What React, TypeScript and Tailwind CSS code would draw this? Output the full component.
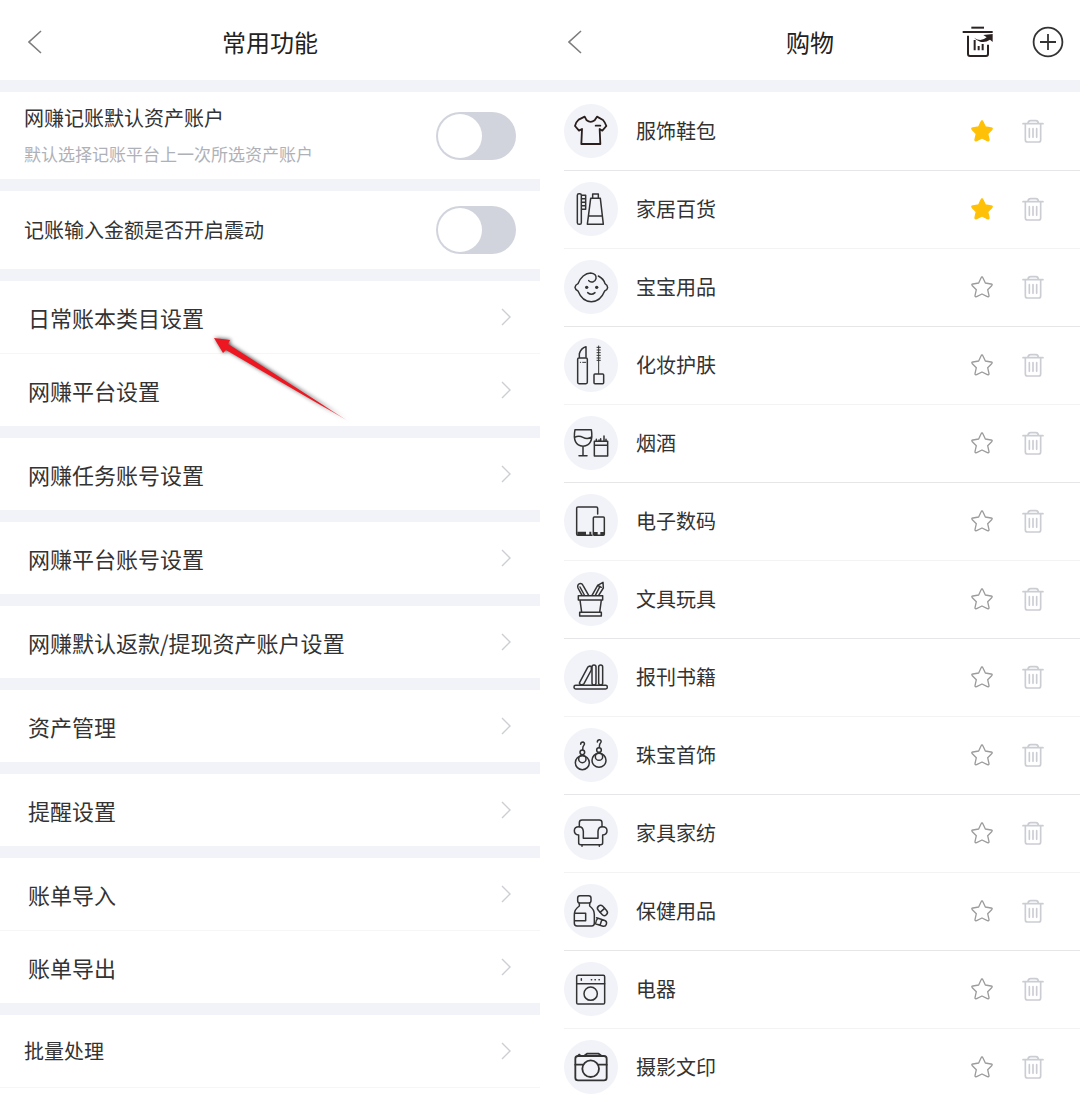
import { useState, type ReactNode } from "react";
import clsx from "clsx";

interface Category {
  name: string;
  icon: ReactNode;
  starred?: boolean;
}

interface SettingGroup {
  items: string[];
  highlighted?: boolean;
}

const settingGroups: SettingGroup[] = [
  { items: ["日常账本类目设置", "网赚平台设置"], highlighted: true },
  { items: ["网赚任务账号设置"] },
  { items: ["网赚平台账号设置"] },
  { items: ["网赚默认返款/提现资产账户设置"] },
  { items: ["资产管理"] },
  { items: ["提醒设置"] },
  { items: ["账单导入", "账单导出"] },
];

// Category icons share a 162 x 162 canvas, the size of the round badge
const categories: Category[] = [
  {
    name: "服饰鞋包",
    starred: true,
    icon: (
      <g stroke="#2b1f1e" strokeWidth={5.5}>
        <path d="M62 38L68 49Q80 58 92 49L99 38L117 48Q124 56 127 66L115 80L107 75L109 120H52L54 75L45 80L33 66Q35 55 44 47Z" />
        <path d="M95 65H109" />
      </g>
    ),
  },
  {
    name: "家居百货",
    starred: true,
    icon: (
      <>
        <rect x="40" y="35" width="12" height="92" rx="5" />
        <path d="M53 40H65V82H53M53 50H65M53 61H65M53 71H65" />
        <path d="M86 48V36H103V48M80 49H109L118 127H70ZM73 102H115" />
      </>
    ),
  },
  {
    name: "宝宝用品",
    icon: (
      <>
        <path d="M103 48C114 54 121 63 123 71Q131 76 131 83Q130 90 122 93C114 113 99 125 82 125C65 125 50 113 42 93Q34 90 33 82Q34 74 42 71C49 52 64 39 80 39C92 40 98 47 96 56C94 66 80 70 74 62" />
        <path d="M71 98Q82 108 93 98" />
        <g fill="#333" stroke="none">
          <circle cx="68" cy="82" r="5" />
          <circle cx="98" cy="82" r="5" />
        </g>
      </>
    ),
  },
  {
    name: "化妆护肤",
    icon: (
      <>
        <rect x="41" y="60" width="29" height="77" rx="4" />
        <path d="M46 58V47Q51 30 66 26V58" />
        <path d="M49 73H50M56 73H65" strokeWidth={3} />
        <path d="M104 24V107" strokeWidth={3} />
        <path d="M99 28H109M99 36H109M99 44H109M99 52H109M99 60H109M99 67H109" strokeWidth={3} />
        <rect x="90" y="108" width="29" height="29" rx="3" />
      </>
    ),
  },
  {
    name: "烟酒",
    icon: (
      <>
        <path d="M33 41H82Q90 88 57 91Q24 88 33 41ZM32 64Q44 57 57 64Q70 71 83 63M57 91V118M45 119H69" />
        <path d="M91 76H131V120H91ZM91 88H131" />
        <path d="M97 70V76M105 72V76M110 68V76M120 60V76M126 70V76" />
      </>
    ),
  },
  {
    name: "电子数码",
    icon: (
      <>
        <path d="M84 124H41Q38 124 38 120V42Q38 39 42 39H97Q101 39 101 43V60" />
        <rect x="88" y="69" width="33" height="55" rx="3" />
        <path d="M40 118H66M76 118H82M90 119H101M109 119H120" strokeWidth={10} strokeLinecap="butt" />
      </>
    ),
  },
  {
    name: "文具玩具",
    icon: (
      <>
        <path d="M43 71H116V84H43ZM48 84L53 121M112 84L107 121M47 121H112V132H47Z" />
        <path d="M54 70L42 48Q39 38 47 35Q54 34 57 40L74 70M48 45L61 69" />
        <path d="M84 70L101 40L117 31L118 48L104 70M94 70L108 43M101 40L112 46" />
      </>
    ),
  },
  {
    name: "报刊书籍",
    icon: (
      <>
        <rect x="30" y="106" width="100" height="11" rx="5" />
        <rect x="104" y="45" width="12" height="60" rx="6" />
        <rect x="84" y="45" width="12" height="60" rx="6" />
        <path d="M47 97L71 52Q76 46 82 50V60L60 101Q57 106 50 104Q45 102 47 97Z" />
      </>
    ),
  },
  {
    name: "珠宝首饰",
    icon: (
      <>
        <circle cx="55" cy="104" r="21" />
        <circle cx="55" cy="93" r="11" />
        <circle cx="55" cy="73" r="7" />
        <path d="M50 49Q50 42 57 42Q64 45 60 51Q56 54 56 65" />
        <circle cx="105" cy="97" r="21" />
        <circle cx="105" cy="86" r="11" />
        <circle cx="105" cy="66" r="7" />
        <path d="M100 42Q100 35 107 35Q114 38 110 44Q106 47 106 58" />
      </>
    ),
  },
  {
    name: "家具家纺",
    icon: (
      <>
        <path d="M46 62V50Q46 42 54 42H106Q114 42 114 50V62" />
        <path d="M44 87Q31 85 31 74Q31 62 45 62Q57 62 58 76V97H102V76Q103 62 115 62Q129 62 129 74Q129 85 116 87V110Q116 116 110 116H50Q44 116 44 110Z" />
        <path d="M54 116V121M106 116V121" />
      </>
    ),
  },
  {
    name: "保健用品",
    icon: (
      <>
        <rect x="41" y="35" width="40" height="22" rx="7" />
        <path d="M46 58V66Q31 76 31 92V118Q31 126 39 126H83Q91 126 91 118V92Q91 76 77 66V58M31 88H65V110H31" />
        <g transform="rotate(48 115 79)">
          <rect x="98" y="70" width="35" height="18" rx="9" />
          <path d="M115 70V88" />
        </g>
        <g transform="rotate(18 110 115)">
          <path d="M94 106H118Q128 106 128 115Q128 124 118 124H94M111 106V124M98 106Q94 114 97 124" />
        </g>
      </>
    ),
  },
  {
    name: "电器",
    icon: (
      <>
        <rect x="38" y="40" width="84" height="86" rx="4" />
        <path d="M38 65H122" />
        <circle cx="80" cy="95" r="20" />
        <path d="M52 50V55M82 53H83M93 53H94M105 53H106" />
      </>
    ),
  },
  {
    name: "摄影文印",
    icon: (
      <g strokeWidth={5.5}>
        <rect x="34" y="48" width="94" height="73" rx="8" />
        <path d="M61 47L69 41H104L112 47M34 74H57M103 74H128M45 44H47M43 46V48" />
        <circle cx="80" cy="86" r="25" />
      </g>
    ),
  },
];

function ScreenHeader({ title, children }: { title: string; children?: ReactNode }) {
  return (
    <header className="grid h-20 grid-cols-[1fr_auto_1fr] items-center bg-white pt-1 pr-4 pl-7">
      <button type="button" aria-label="返回" className="-mr-3 justify-self-start">
        <svg className="h-6 w-4" viewBox="0 0 16 24" fill="none" stroke="#7d7d7d" strokeWidth={1.6}>
          <path d="M13 1L1 12L13 23" />
        </svg>
      </button>
      <h1 className="-ml-3 text-2xl text-[#222]">{title}</h1>
      <div className="flex items-center justify-end gap-[38px]">{children}</div>
    </header>
  );
}

function Toggle({ id }: { id: string }) {
  return (
    <input
      id={id}
      type="checkbox"
      role="switch"
      className="h-12 w-20 shrink-0 appearance-none rounded-full bg-[#d1d4dc] p-0.5 before:block before:size-11 before:rounded-full before:bg-white before:transition-transform checked:bg-[#ffc107] checked:before:translate-x-8"
    />
  );
}

function Chevron() {
  return (
    <svg className="h-5 w-3 shrink-0" viewBox="0 0 12 20" fill="none" stroke="#ccced3" strokeWidth={1.4}>
      <path d="M2 2L10 10L2 18" />
    </svg>
  );
}

function PointerArrow() {
  return (
    <svg
      className="pointer-events-none absolute top-[53px] left-[210px] h-[92px] w-[144px] drop-shadow-[1px_0_2px_rgba(0,0,0,0.75)]"
      viewBox="0 0 144 92"
    >
      <defs>
        <linearGradient id="arrow-fade" x1="0" y1="0" x2="1" y2="0">
          <stop offset="0.8" stopColor="#ee1620" />
          <stop offset="1" stopColor="#ee1620" stopOpacity="0.3" />
        </linearGradient>
      </defs>
      <path d="M4 4L20 6L18 10L138 87L16 16L13 19Z" fill="url(#arrow-fade)" />
    </svg>
  );
}

function TrashIcon() {
  return (
    <svg
      className="h-6 w-[22px]"
      viewBox="0 0 66 72"
      fill="none"
      stroke="#cbcdd3"
      strokeWidth={5}
      strokeLinecap="round"
    >
      <path d="M18 12Q19 5 26 5H42Q48 5 49 12M3 14H63M10 15V62Q10 69 17 69H50Q56 69 56 62V15M22 29V55M33 29V55M44 29V55" />
    </svg>
  );
}

function StarIcon({ filled }: { filled: boolean }) {
  return (
    <svg
      className="h-6 w-6"
      viewBox="0 0 72 72"
      fill={filled ? "#ffc107" : "none"}
      stroke={filled ? "#ffc107" : "#9c9c9c"}
      strokeWidth={4}
      strokeLinejoin="round"
    >
      <path d="M36 6Q38 6 39 9L46 24L63 27Q69 28 65 32L53 44L57 62Q57 66 52 65L36 57L20 65Q15 66 15 62L19 44L7 32Q3 28 9 27L26 24L33 9Q34 6 36 6Z" />
    </svg>
  );
}

function SettingsScreen() {
  return (
    <section className="flex flex-col gap-3 bg-[#f2f3f8]">
      <ScreenHeader title="常用功能" />

      <div className="flex h-[87px] items-center justify-between bg-white px-6">
        <label htmlFor="default-account" className="flex flex-col gap-3">
          <span className="text-xl leading-6 text-[#333]">网赚记账默认资产账户</span>
          <span className="text-[17px] leading-6 text-[#afb1b8]">默认选择记账平台上一次所选资产账户</span>
        </label>
        <Toggle id="default-account" />
      </div>

      <div className="flex h-[78px] items-center justify-between bg-white px-6">
        <label htmlFor="vibrate" className="text-xl text-[#333]">
          记账输入金额是否开启震动
        </label>
        <Toggle id="vibrate" />
      </div>

      {settingGroups.map((group) => (
        <div key={group.items[0]} className="relative bg-white">
          <ul className="divide-y divide-[#f6f6f7]">
            {group.items.map((item) => (
              <li key={item}>
                <button
                  type="button"
                  className="flex h-[72px] w-full items-center justify-between px-7 text-left text-[22px] text-[#333]"
                >
                  {item}
                  <Chevron />
                </button>
              </li>
            ))}
          </ul>
          {group.highlighted && <PointerArrow />}
        </div>
      ))}

      <div className="flex-1 bg-white">
        <button
          type="button"
          className="flex h-[73px] w-full items-center justify-between border-b border-[#f6f6f7] pr-7 pl-6 text-left text-xl text-[#333]"
        >
          批量处理
          <Chevron />
        </button>
      </div>
    </section>
  );
}

function CategoryScreen() {
  const [starred, setStarred] = useState<string[]>(
    categories.filter((c) => c.starred).map((c) => c.name)
  );

  const toggleStar = (name: string) => {
    setStarred((prev) =>
      prev.includes(name) ? prev.filter((n) => n !== name) : [...prev, name]
    );
  };

  return (
    <section className="flex flex-col gap-3 bg-[#f2f3f8]">
      <ScreenHeader title="购物">
        <button type="button" aria-label="回收站">
          <svg className="h-8 w-8" viewBox="0 0 96 96" fill="none" stroke="#2b2322" strokeWidth={6}>
            <path d="M28 5H66" />
            <path d="M2 18H92" />
            <path d="M18 29V84Q18 90 24 90H72Q78 90 78 84V56" />
            <path d="M38 42V73M50 60V73M62 54V73" />
            <path d="M36 35Q56 50 74 34L64 27L92 24V48L84 41Q60 58 36 35Z" fill="#2b2322" stroke="none" />
          </svg>
        </button>
        <button type="button" aria-label="添加">
          <svg className="h-8 w-8" viewBox="0 0 32 32" fill="none" stroke="#333" strokeWidth={1.8}>
            <circle cx="16" cy="16" r="14.4" />
            <path d="M8 16H24M16 8V24" />
          </svg>
        </button>
      </ScreenHeader>

      <ul className="flex-1 bg-white pl-6">
        {categories.map((category, index) => {
          const isStarred = starred.includes(category.name);
          const isLast = index === categories.length - 1;
          return (
            <li
              key={category.name}
              className={clsx(
                "flex items-center justify-between pt-3 pr-9",
                !isLast && "pb-3",
                !isLast && (index % 2 === 0 ? "shadow-[0_1px_0_#e6e6e8]" : "shadow-[0_1px_0_#f3f3f4]")
              )}
            >
              <div className="flex items-center gap-[18px]">
                <span className="size-[54px] rounded-full bg-[#f2f3f8]">
                  <svg
                    className="size-full"
                    viewBox="0 0 162 162"
                    fill="none"
                    stroke="#333"
                    strokeWidth={4.5}
                    strokeLinecap="round"
                    strokeLinejoin="round"
                  >
                    {category.icon}
                  </svg>
                </span>
                <span className="text-xl text-[#333]">{category.name}</span>
              </div>
              <div className="flex items-center gap-7">
                <button
                  type="button"
                  aria-label={`收藏${category.name}`}
                  aria-pressed={isStarred}
                  onClick={() => toggleStar(category.name)}
                >
                  <StarIcon filled={isStarred} />
                </button>
                <button type="button" aria-label={`删除${category.name}`}>
                  <TrashIcon />
                </button>
              </div>
            </li>
          );
        })}
      </ul>
    </section>
  );
}

export default function App() {
  return (
    <main className="grid min-h-screen grid-cols-2 bg-white font-['Noto_Sans_CJK_SC',sans-serif]">
      <SettingsScreen />
      <CategoryScreen />
    </main>
  );
}
